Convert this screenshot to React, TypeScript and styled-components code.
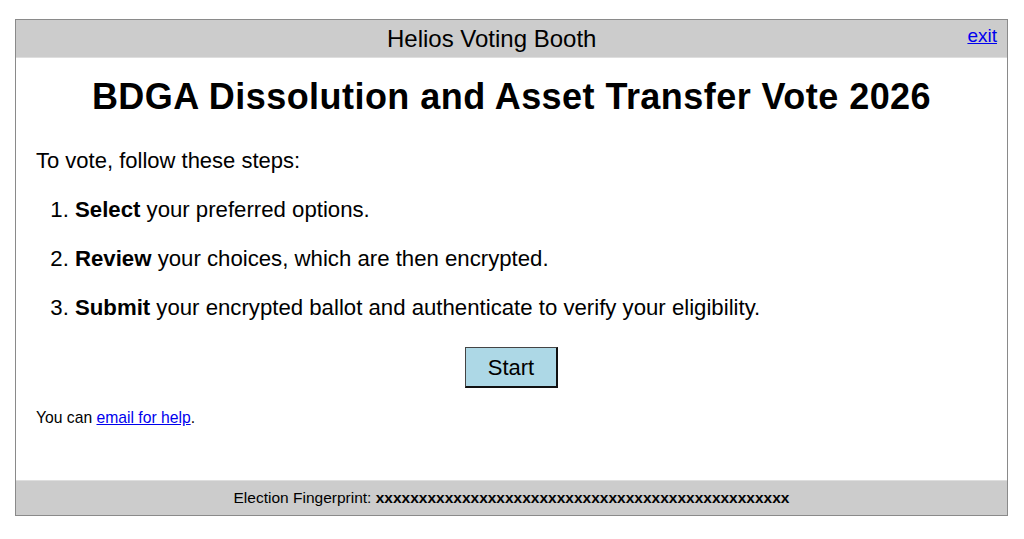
import styled, { createGlobalStyle } from "styled-components";

const GlobalStyle = createGlobalStyle`
  html, body {
    margin: 0;
    padding: 0;
    background: #fff;
  }
  body {
    font-family: "Liberation Sans", Arial, Helvetica, sans-serif;
    color: #000;
  }
`;

const Page = styled.div`
  padding: 19px 0 0 15px;
`;

const Frame = styled.div`
  width: 993px;
  height: 497px;
  box-sizing: border-box;
  border: 1px solid #8a8a8a;
  display: flex;
  flex-direction: column;
`;

const Header = styled.div`
  height: 38px;
  background: #cccccc;
  border-bottom: 1px solid #dedede;
  box-sizing: border-box;
  display: flex;
  align-items: center;
`;

const HeaderTitle = styled.h2`
  flex: 1;
  margin: 0;
  text-align: center;
  font-size: 24px;
  font-weight: normal;
  line-height: 38px;
`;

const ExitLink = styled.a`
  align-self: flex-start;
  margin: 4px 10px 0 0;
  font-size: 19px;
  line-height: 24px;
  color: #0000ee;
  text-decoration: underline;
`;

const Content = styled.div`
  flex: 1;
  padding: 0 20px;
`;

const Title = styled.h1`
  margin: 19px 0 0;
  text-align: center;
  font-size: 36px;
  letter-spacing: 0.45px;
  line-height: 40px;
  font-weight: bold;
`;

const Intro = styled.p`
  margin: 31px 0 0;
  font-size: 22px;
  line-height: 26px;
`;

const Steps = styled.ol`
  margin: 23px 0 0;
  padding-left: 39px;
  display: flex;
  flex-direction: column;
  gap: 23px;
`;

const Step = styled.li`
  font-size: 22.2px;
  line-height: 26px;
`;

const ButtonRow = styled.div`
  display: flex;
  justify-content: center;
  margin-top: 26px;
`;

const StartButton = styled.button`
  width: 93px;
  height: 41px;
  box-sizing: border-box;
  background: #add8e6;
  border-style: solid;
  border-color: #444 #111 #111 #444;
  border-width: 1px 2px 2px 1px;
  font-family: inherit;
  font-size: 22px;
  color: #000;
  padding: 1px 0 0;
  cursor: pointer;
`;

const Help = styled.p`
  margin: 21px 0 0;
  font-size: 15.7px;
  line-height: 18px;

  a {
    color: #0000ee;
  }
`;

const Footer = styled.div`
  height: 35px;
  background: #cccccc;
  border-top: 1px solid #dedede;
  box-sizing: border-box;
  display: flex;
  align-items: center;
  justify-content: center;
  font-size: 15.5px;
`;

export default function App() {
  return (
    <>
      <GlobalStyle />
      <Page>
        <Frame>
          <Header>
            <HeaderTitle>Helios Voting Booth</HeaderTitle>
            <ExitLink href="#">exit</ExitLink>
          </Header>
          <Content>
            <Title>BDGA Dissolution and Asset Transfer Vote 2026</Title>
            <Intro>To vote, follow these steps:</Intro>
            <Steps>
              <Step>
                <b>Select</b> your preferred options.
              </Step>
              <Step>
                <b>Review</b> your choices, which are then encrypted.
              </Step>
              <Step>
                <b>Submit</b> your encrypted ballot and authenticate to verify your eligibility.
              </Step>
            </Steps>
            <ButtonRow>
              <StartButton>Start</StartButton>
            </ButtonRow>
            <Help>
              You can <a href="#">email for help</a>.
            </Help>
          </Content>
          <Footer>
            Election Fingerprint:&nbsp;<b>{"x".repeat(48)}</b>
          </Footer>
        </Frame>
      </Page>
    </>
  );
}
